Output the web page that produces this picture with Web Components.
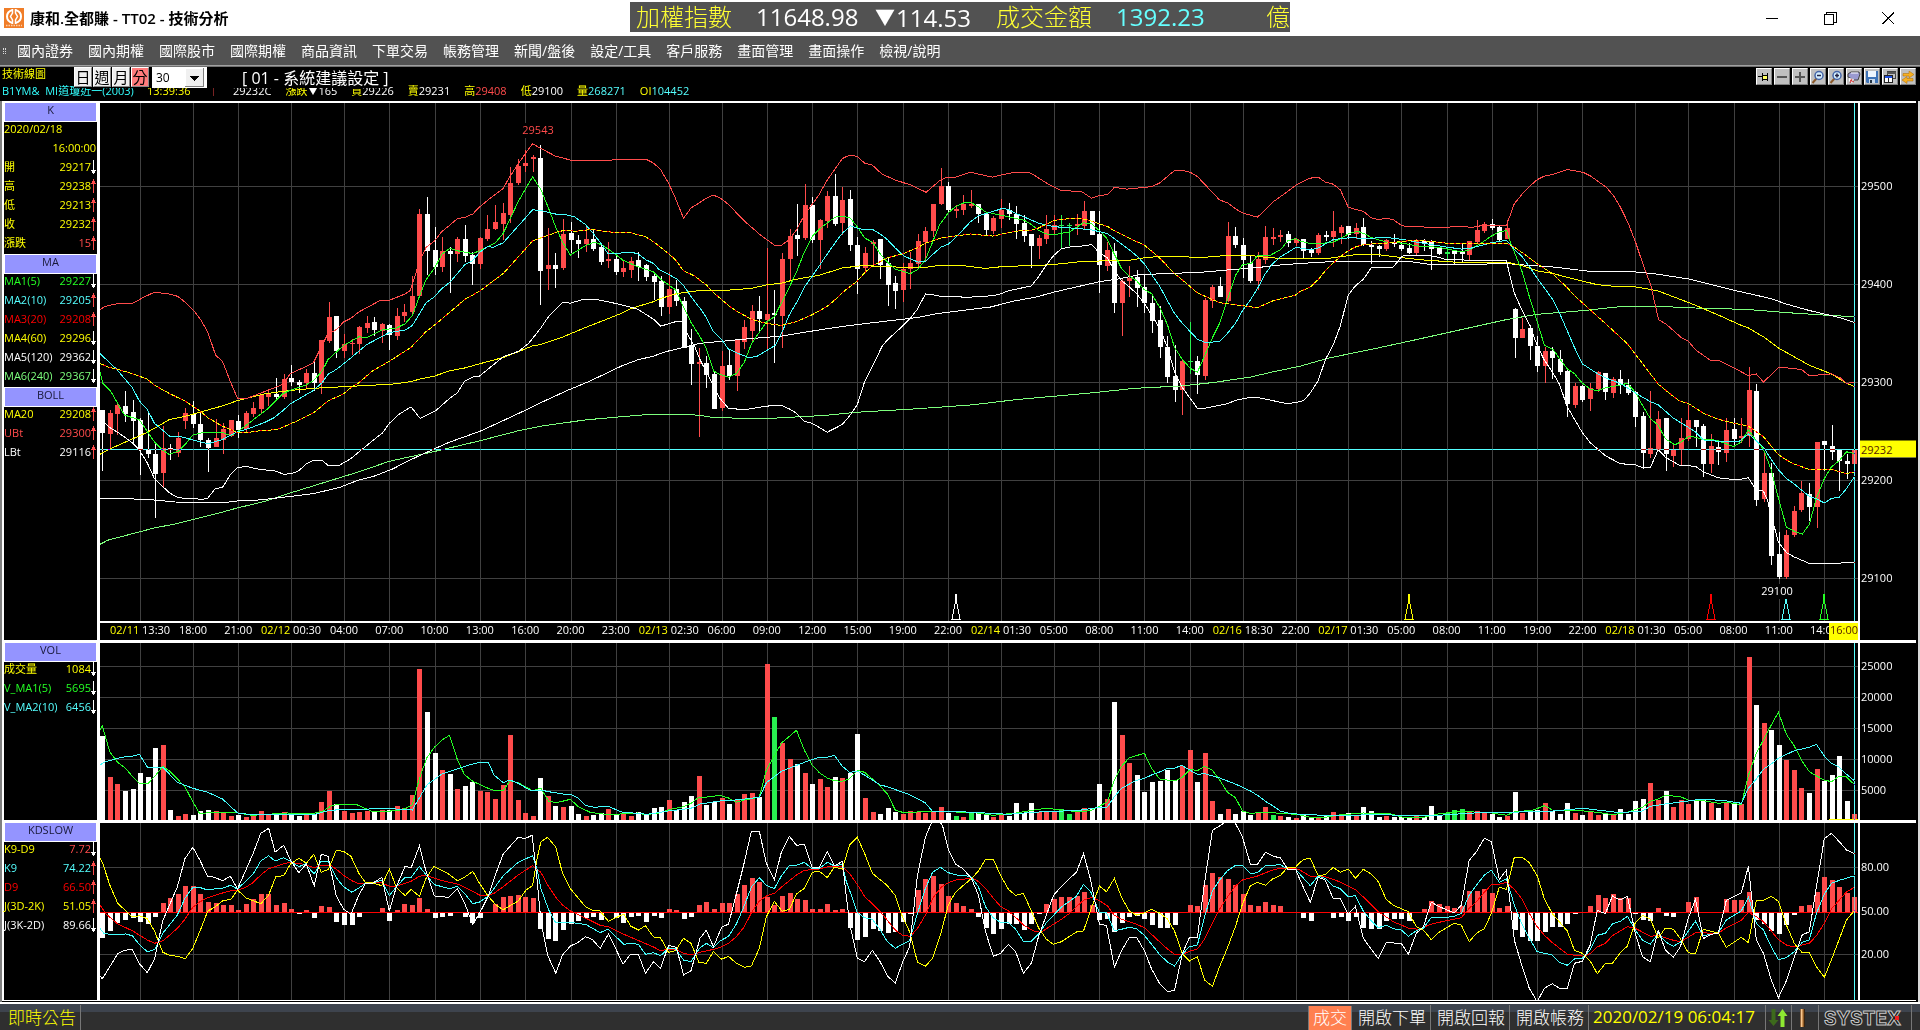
<!DOCTYPE html>
<html lang="zh-Hant">
<head>
<meta charset="utf-8">
<title>康和.全都賺 - TT02 - 技術分析</title>
<style>
    body {
        margin: 0;
        background: #000;
        color: #fff;
        font-family: "Open Sans", "Noto Sans CJK TC", sans-serif;
        font-size: 11px;
    }
</style>
</head>
<body>
<trade-app></trade-app>

<script>
const RED = '#ff4b4b';
const WHITE = '#ffffff';
const GREEN = '#28f050';
const CYAN = '#55ffff';
const COLORS = {r: RED, w: WHITE, g: GREEN};

// Plot sizes the series are recorded at, they are stretched to the real size on draw
const BASE_WIDTH = 1758;
const FIRST_BAR = 2.3;
const BAR_STEP = 7.552;

// Traces come in three overlapping strips, 1568 units wide each
const STRIPS = [
    {start: -10, limit: 1543},
    {start: 600, limit: 1517},
    {start: 1200, limit: 1568}
];
const STRIP_SCALE = 620 / 1568;

// index of the bar, date, time
const TIMES = [
    [5, '02/11', '13:30'], [12, '', '18:00'], [18, '', '21:00'], [25, '02/12', '00:30'], [32, '', '04:00'],
    [38, '', '07:00'], [44, '', '10:00'], [50, '', '13:00'], [56, '', '16:00'], [62, '', '20:00'],
    [68, '', '23:00'], [75, '02/13', '02:30'], [82, '', '06:00'], [88, '', '09:00'], [94, '', '12:00'],
    [100, '', '15:00'], [106, '', '19:00'], [112, '', '22:00'], [119, '02/14', '01:30'], [126, '', '05:00'],
    [132, '', '08:00'], [138, '', '11:00'], [144, '', '14:00'], [151, '02/16', '18:30'], [158, '', '22:00'],
    [165, '02/17', '01:30'], [172, '', '05:00'], [178, '', '08:00'], [184, '', '11:00'], [190, '', '19:00'],
    [196, '', '22:00'], [203, '02/18', '01:30'], [210, '', '05:00'], [216, '', '08:00'], [222, '', '11:00'],
    [228, '', '14:00']
];

// colour, body top, body bottom, high, low
const CANDLES = `w884,948,884,1058 r892,951,884,998 r870,894,864,955 w872,894,830,917 w889,914,855,980 w912,997,906,1069
w997,1008,892,1022 w1009,1065,975,1191 r992,1062,930,1103 w992,999,982,1026 r963,1005,947,1018 r892,914,879,938
w894,923,858,934 w924,969,889,989 w969,992,964,1060 r964,989,909,989 r938,968,922,1008 r912,959,912,961
w915,941,898,965 r892,939,887,946 r878,894,862,904 r840,880,838,892 r836,847,830,872 w837,847,793,855
r796,846,780,852 w793,804,755,815 w804,812,798,834 r778,808,766,824 w778,807,748,830 r685,808,683,838
r619,687,576,692 w616,715,616,736 r696,715,667,736 r692,696,680,728 r647,696,645,724 r635,650,616,664
w633,655,620,672 r640,658,636,692 w641,669,640,712 r616,672,593,684 r604,615,582,632 r559,604,502,612
r325,559,311,561 w325,430,277,498 w428,475,363,498 r430,476,391,489 w430,438,420,550 r396,439,391,461
w396,444,356,461 w442,467,434,527 r394,467,391,481 r368,396,328,402 r348,368,299,370 r322,353,295,398
r237,327,191,350 r188,237,168,242 r180,187,143,205 r163,167,157,205 w165,487,129,584 r470,482,365,543
w470,481,436,536 r382,479,339,484 w379,399,348,436 w399,410,386,450 r396,411,359,433 w396,425,368,430
w419,461,408,470 r453,459,405,479 w453,490,436,498 r479,489,456,506 r459,485,449,507 w456,475,433,516
w470,504,468,515 w502,518,491,570 w516,590,501,616 r539,590,489,610 w539,573,514,587 w573,706,562,706
w698,754,653,812 r747,754,708,961 w750,783,730,820 w781,881,773,881 r758,878,715,886 w755,787,711,798
r685,787,682,830 r647,689,628,710 r602,658,584,689 w602,624,559,661 r610,627,421,712 w607,613,543,750
r453,615,436,706 r388,453,368,515 w385,396,296,444 r299,393,239,398 w299,399,277,408 r342,399,338,481
r274,345,259,364 w274,353,211,359 r285,350,249,384 w282,413,257,430 w413,481,391,552 r436,479,419,489
r405,411,399,473 w396,470,396,510 w466,526,450,587 w521,544,502,596 r482,541,466,575 r465,481,433,539
r402,467,382,475 r373,405,362,461 r296,373,296,390 r246,296,194,299 w245,314,234,319 r311,316,299,336
r296,314,270,327 r296,302,257,308 w296,325,296,350 w325,370,319,385 r336,373,331,382 r314,339,282,364
w315,325,294,342 w324,353,302,396 w351,388,328,405 w382,416,382,479 r393,416,385,453 r368,396,328,411
r356,371,328,382 g356,359,328,425 g356,359,350,416 r353,359,325,385 r316,359,288,371 w316,385,316,385
w382,470,316,549 r428,473,405,487 w430,578,408,607 r516,578,510,672 r507,515,473,561 w506,535,485,590
w533,579,498,607 w579,630,556,664 w627,703,587,736 w704,790,672,807 w787,827,698,861 r744,827,741,898
g743,747,633,780 w744,784,730,838 r570,786,564,798 r532,573,527,593 w530,563,505,563 r388,573,348,577
w388,413,362,422 w413,456,393,507 w464,516,442,522 r453,516,433,541 r391,456,359,467 r391,395,365,413
r385,390,370,405 w382,408,373,419 r396,407,393,416 w396,430,396,450 w428,435,422,447 r385,436,380,441
w385,390,373,402 r373,390,316,418 r362,379,356,410 w359,385,359,396 r365,381,350,396 w362,413,336,416
w413,418,402,467 w416,425,413,447 r399,425,396,430 w405,410,382,418 w413,425,405,430 w422,436,408,439
r402,436,396,444 w402,407,396,430 w405,425,399,485 w420,438,419,441 g434,438,420,459 w430,438,428,468
w430,438,411,464 r402,441,402,455 r371,405,342,407 r353,373,348,379 w353,365,339,372 w362,399,359,402
r365,396,342,396 w596,679,593,736 r653,679,621,679 w650,701,641,741 w701,758,672,775 r716,758,704,807
w716,736,704,795 w738,775,713,784 w773,867,770,904 r815,869,807,878 w815,855,812,861 r821,852,807,886
r775,824,773,832 w778,832,778,855 r796,835,790,850 w795,813,770,838 w812,834,795,840 w832,904,830,932
w901,1006,889,1051 r992,1008,830,1022 r909,997,887,997 w907,1008,907,1057 r997,1015,983,1046 r964,997,907,1040
r912,966,870,972 w912,932,912,989 w929,1038,924,1074 r986,1037,952,1063 w989,1004,975,1042 r941,1005,906,1031
w938,966,907,986 r957,963,907,977 r827,957,762,989 w830,1140,810,1157 r1062,1137,1006,1145 w1062,1299,1035,1326
w1294,1360,1231,1365 r1240,1360,1226,1365 r1172,1240,1157,1246 r1120,1168,1086,1174 w1123,1160,1092,1200
r975,1160,975,1220 w972,983,972,1057 w986,1003,927,1026 w997,1029,997,1114 w1029,1037,1008,1080 r997,1037,997,1037`;

const PRICE_LINES = [
    {color: '#7dff7d', strips: [
        '25,1267 45,1255 163,1220 210,1210 335,1175 373,1163 440,1145 507,1120 680,1060 757,1030 871,1002 985,972 1083,943 1140,930 1253,912 1385,899 1425,896 1500,896 1568,903',
        '0,899 30,905 90,907 190,907 320,899 398,890 540,881 690,869 800,854 990,835 1100,822 1220,815 1300,805 1392,790 1450,775 1568,744',
        '0,759 75,735 180,711 275,688 350,669 522,626 600,611 720,600 810,589 920,589 1000,593 1130,597 1230,606 1310,612 1403,618']},
    {color: WHITE, strips: [
        '25,1137 100,1137 160,1140 215,1146 340,1148 373,1143 430,1140 507,1130 565,1122 630,1105 680,1083 715,1074 765,1052 810,1026 860,1000 910,975 985,945 1045,914 1119,875 1140,863 1205,829 1263,802 1345,758 1385,741 1425,730 1455,718 1520,700 1550,694 1568,694',
        '0,694 55,688 110,682 206,673 320,652 398,640 474,630 550,620 600,609 735,590 795,573 850,562 894,548 1010,518 1060,510 1110,498 1270,491 1340,484 1410,478 1448,472 1530,464 1568,463',
        '0,466 90,460 275,460 330,469 530,467 562,470 640,476 730,488 848,490 900,496 982,510 1096,542 1190,566 1230,582 1288,600 1364,620 1403,635']},
    {color: '#ffff00', strips: [
        '25,1010 50,995 140,950 163,936 201,911 240,902 335,872 373,857 440,838 507,828 565,822 680,815 765,810 810,803 833,796 871,787 910,772 947,764 985,752 1045,734 1083,718 1119,701 1140,697 1195,676 1253,649 1340,610 1369,594 1425,575 1443,566 1481,553 1501,549 1568,543',
        '0,543 60,543 130,537 168,527 206,522 244,511 300,500 360,479 410,472 474,475 532,478 572,477 610,471 666,472 720,480 765,475 880,470 912,467 960,461 1030,458 1086,457 1124,450 1162,446 1220,446 1260,450 1334,443 1392,443 1440,450 1490,452 1568,452',
        '0,452 75,451 140,441 190,440 240,447 300,455 400,463 530,464 562,472 600,487 640,495 695,511 750,526 800,532 850,533 905,544 1000,585 1060,614 1115,642 1134,650 1172,675 1210,707 1288,756 1344,781 1382,808 1403,817']},
    {color: RED, strips: [
        '25,598 35,590 60,582 107,580 140,560 163,548 205,554 222,560 240,576 262,600 280,626 298,662 318,728 335,745 355,803 373,850 398,850 440,832 487,811 507,780 540,763 565,749 600,670 625,653 641,633 660,622 680,604 715,583 735,571 757,571 797,553 810,543 833,462 850,420 871,402 890,375 910,357 929,338 947,335 968,325 985,305 1010,282 1045,252 1060,222 1083,182 1103,150 1119,125 1140,138 1177,160 1215,171 1320,171 1340,169 1410,171 1425,180 1443,198 1463,237 1481,281 1501,337 1520,308 1545,287 1568,276',
        '0,292 16,280 34,271 52,280 72,298 112,345 150,382 188,414 206,414 226,398 244,370 264,328 300,272 322,228 360,167 378,157 398,161 416,180 436,186 460,211 494,228 532,242 572,263 606,230 625,220 646,220 684,206 740,220 760,214 795,206 830,206 845,214 878,238 912,258 965,261 990,280 1010,272 1030,270 1048,249 1080,254 1142,247 1162,237 1200,201 1220,201 1240,206 1258,218 1314,285 1334,293 1354,310 1372,322 1410,334 1450,290 1480,266 1510,240 1544,223 1568,220',
        '0,237 25,223 46,220 64,234 84,240 102,256 122,305 140,312 160,317 180,336 198,341 218,337 236,341 258,359 330,363 370,363 400,360 435,363 466,357 522,358 542,296 562,268 580,247 600,227 618,217 640,212 676,198 716,206 735,217 775,249 795,276 810,305 830,351 850,410 868,470 887,527 907,627 925,638 945,658 965,678 982,687 1000,712 1038,742 1058,742 1096,763 1134,786 1154,781 1172,804 1192,783 1210,763 1250,765 1270,770 1288,786 1344,781 1366,792 1382,808 1403,804']},
    {color: WHITE, strips: [
        '25,908 50,934 75,951 107,977 125,998 145,1035 163,1080 201,1120 221,1133 240,1136 285,1138 298,1135 316,1109 336,1103 355,1068 373,1048 395,1045 430,1053 470,1058 490,1067 510,1065 528,1057 547,1037 565,1027 587,1027 602,1042 630,1042 660,1022 715,971 740,949 757,922 780,897 812,875 835,908 875,885 910,850 929,835 947,802 968,790 985,787 1045,732 1085,716 1110,693 1140,650 1160,617 1195,577 1215,579 1250,568 1275,568 1310,575 1355,587 1385,596 1425,625 1443,645 1463,638 1481,632 1496,631 1510,665 1530,705 1555,760 1568,795',
        '0,740 16,775 34,815 50,850 72,879 112,883 150,876 188,870 206,870 226,881 244,893 264,916 284,922 322,947 360,925 378,901 398,868 416,804 436,760 460,703 474,684 512,645 532,622 550,596 570,553 600,557 612,561 684,562 740,558 760,553 780,544 838,530 856,504 876,470 894,444 914,424 940,418 970,416 990,412 1010,436 1030,450 1050,490 1066,515 1086,533 1104,552 1124,580 1142,613 1162,650 1182,705 1200,775 1220,820 1238,848 1258,879 1275,879 1334,866 1354,856 1390,848 1410,848 1486,866 1526,856 1544,836 1568,787',
        '0,860 10,856 26,835 46,800 64,741 84,698 102,645 122,556 140,530 160,511 180,479 236,476 258,445 280,442 325,443 345,447 370,455 522,459 542,550 562,600 580,640 600,700 618,742 638,775 656,810 676,875 694,910 714,948 734,977 772,1014 810,1037 848,1040 866,1048 886,1048 906,997 924,1018 960,1042 1000,1044 1020,1060 1058,1077 1096,1082 1116,1081 1134,1077 1154,1112 1172,1115 1182,1140 1192,1185 1210,1260 1230,1290 1250,1303 1288,1321 1360,1321 1380,1318 1403,1318']},
    {color: '#24ff24', strips: [
        '25,775 33,808 52,830 87,898 125,912 163,975 182,997 200,1010 222,1002 240,983 260,955 285,948 335,948 355,957 373,946 450,880 487,838 507,827 547,812 565,800 587,773 602,740 641,700 680,675 700,678 740,655 775,650 797,638 815,615 833,560 850,512 871,480 890,440 910,423 929,430 968,438 985,430 1010,416 1025,407 1045,380 1060,345 1083,290 1119,219 1140,255 1160,310 1177,360 1195,405 1215,442 1250,417 1275,405 1295,413 1329,440 1348,457 1385,475 1425,490 1443,511 1481,541 1501,590 1520,634 1540,670 1555,705 1568,745',
        '0,675 15,705 35,773 50,782 72,790 92,780 112,748 130,695 168,633 188,618 206,578 226,533 244,490 264,433 284,388 302,368 322,350 345,332 378,334 400,365 416,393 436,405 456,439 474,462 494,482 532,495 550,484 570,455 606,356 628,322 646,304 670,292 686,293 705,305 722,319 760,328 820,343 838,355 856,372 876,382 900,383 935,376 970,350 990,353 1010,372 1028,393 1048,440 1066,480 1086,502 1104,515 1124,541 1142,552 1162,590 1182,640 1200,705 1220,740 1240,765 1258,776 1276,730 1296,678 1314,637 1334,570 1354,500 1372,470 1395,465 1410,444 1440,444 1468,427 1486,402 1506,395 1526,400 1544,408 1568,409',
        '0,402 26,409 46,410 84,405 102,395 122,382 145,374 165,382 180,392 218,405 258,408 294,416 350,420 408,433 428,428 446,416 466,402 484,388 504,376 522,372 532,405 562,490 580,560 600,632 618,699 640,712 676,767 694,780 714,807 734,824 752,829 772,821 828,808 848,833 866,870 886,908 906,927 924,966 948,983 965,974 982,960 1000,961 1020,969 1040,968 1058,972 1096,988 1116,975 1134,940 1154,972 1172,995 1192,1055 1210,1135 1230,1218 1250,1230 1270,1238 1288,1210 1306,1135 1326,1080 1344,1046 1364,1028 1382,1003 1403,1008']},
    {color: '#44ffff', strips: [
        '25,723 65,765 107,820 125,858 145,882 163,922 201,958 221,958 240,963 298,980 335,968 373,946 398,938 440,920 465,906 487,886 507,866 547,840 565,828 587,806 602,782 625,767 660,735 700,697 757,663 797,656 815,643 833,610 850,578 871,561 890,537 910,520 929,495 947,470 965,460 985,435 1005,418 1020,420 1045,407 1060,388 1103,334 1119,313 1140,315 1177,325 1195,325 1225,333 1253,355 1270,377 1295,413 1310,438 1348,436 1369,434 1387,439 1405,455 1425,466 1440,484 1463,497 1485,511 1500,527 1520,560 1540,590 1568,640',
        '0,593 15,618 34,660 55,684 72,710 95,722 125,735 145,730 190,700 210,655 226,612 244,578 264,533 284,502 322,439 340,410 360,380 380,359 398,365 416,370 438,370 456,382 474,398 494,422 515,444 532,453 552,462 570,460 590,439 610,419 628,411 646,393 684,347 704,330 735,320 765,309 780,312 798,323 856,351 894,361 960,367 990,370 1030,381 1048,395 1086,427 1104,444 1124,467 1142,498 1162,530 1182,572 1200,608 1220,637 1238,658 1258,682 1280,692 1314,688 1334,665 1354,637 1372,600 1392,570 1410,537 1430,495 1448,467 1468,447 1490,432 1506,421 1530,423 1550,421 1568,416',
        '0,422 26,427 46,422 84,398 122,393 180,394 218,392 258,397 294,405 370,419 408,425 428,424 446,418 484,407 522,400 542,425 562,447 580,475 600,508 638,567 658,612 676,658 694,705 714,752 752,780 772,792 810,808 848,835 886,860 906,869 944,907 1000,946 1020,969 1040,972 1110,974 1134,952 1154,972 1172,990 1192,1025 1210,1054 1230,1079 1250,1095 1288,1130 1306,1137 1326,1149 1344,1136 1364,1132 1382,1108 1403,1072']},
    // MA3 and the middle band share one path, so it is drawn twice: red, then yellow dashes
    {color: '#ff0000', dash: '#ffff00', strips: [
        '25,751 45,761 70,768 107,780 145,796 163,813 201,837 240,858 280,888 298,906 335,930 373,948 398,948 430,943 470,940 487,933 528,913 565,892 602,858 641,838 660,820 680,806 715,772 757,745 812,705 833,680 850,660 871,642 929,587 947,569 985,545 1045,495 1085,445 1119,402 1140,393 1185,375 1200,372 1230,374 1270,369 1310,376 1369,379 1405,390 1425,404 1463,438 1481,456 1501,487 1530,502 1568,536',
        '0,514 16,527 34,549 72,586 92,602 130,625 168,637 205,643 244,632 284,612 322,588 340,571 360,549 398,516 416,493 436,473 474,450 512,439 550,421 570,408 610,393 684,382 740,388 798,374 838,371 856,365 894,344 914,340 955,337 975,340 1030,360 1048,373 1086,394 1124,414 1162,450 1200,495 1220,513 1258,550 1314,578 1410,592 1448,573 1506,556 1544,533 1568,508',
        '0,546 26,533 46,512 64,487 84,465 102,447 122,430 140,419 160,412 218,408 294,399 370,408 522,408 542,420 562,435 600,467 638,495 676,535 694,558 772,637 828,695 906,810 944,845 960,858 982,865 1020,893 1058,910 1096,921 1134,930 1154,946 1172,960 1210,1011 1230,1026 1250,1038 1288,1053 1344,1053 1382,1065 1403,1060']}
];

const VOLUMES = `w318 r441 r462 w483 w477 w429 w441 w354 r345 w540 r558 r552 w555 w543 w540 r543 r549 r558 w555 r561
r555 r543 r555 w549 r546 w555 w558 r549 w553 r516 r483 w522 r543 r549 r546 r543 w543 r540 w540 r528
r534 r495 r117 w246 w369 r420 w432 r477 w468 w456 r483 r486 r507 r465 r315 r510 r549 r558 w444 r498
w528 r531 w528 w552 r558 w555 w549 r537 w552 r549 r558 w546 w555 w534 w531 r510 w540 w516 w498 r438
w525 w516 r504 w522 r510 r492 r489 w500 r102 g261 r339 r387 w402 r429 w462 r447 r471 w441 r444 w429
w312 r504 r546 w552 w534 w546 r552 r543 r545 r549 r546 r531 w549 g558 r561 g546 w549 w552 r561 r555
w558 w519 w549 w519 r546 r543 r546 g537 g552 r543 r534 w537 w462 r507 w216 r315 r399 w435 w486 w456
w453 w420 w450 r408 r360 w456 r369 r513 w552 r537 w552 w543 w555 r549 r531 g555 r558 w561 r564 w555
w564 r563 w558 r546 r552 w549 r558 w531 w543 w561 r558 w561 w561 w561 r558 w561 w528 w555 g549 g540
g537 r546 r543 r549 w552 w561 r558 w486 r549 w540 w540 r519 w543 w552 w519 r549 w555 r543 r555 w549
r555 w537 w552 w513 w507 r459 r510 w483 r531 r510 r522 w510 w510 r519 w534 r519 w519 r522 r81 w225
r279 w300 w345 r390 r420 r474 w489 r417 w453 w435 w378 w513 r552`;

const VOLUME_LINES = [
    {color: '#24ff24', strips: [
        '25,300 31,287 50,366 70,397 90,415 107,439 125,460 147,460 163,440 184,409 201,423 240,470 260,515 277,550 335,547 373,549 410,556 500,549 560,552 590,543 612,526 640,523 675,524 715,545 780,542 797,535 815,525 833,445 852,383 871,352 890,330 909,316 929,388 947,434 968,454 1005,474 1025,482 1045,482 1062,452 1083,458 1119,482 1140,475 1160,514 1180,518 1215,508 1235,530 1265,547 1310,554 1385,549 1405,554 1440,549 1463,539 1501,530 1520,520 1540,502 1568,505',
        '0,504 50,496 72,504 92,517 112,510 150,502 168,420 188,378 206,339 244,301 264,361 284,406 302,428 322,444 340,452 360,454 378,446 398,421 416,427 436,447 456,469 474,492 494,540 512,547 590,545 630,545 700,549 740,556 800,549 840,541 876,535 960,546 990,541 1030,516 1048,450 1066,409 1086,383 1124,370 1142,415 1162,447 1200,453 1220,442 1240,418 1258,422 1276,409 1296,421 1314,450 1334,487 1354,503 1372,543 1392,550 1430,547 1506,553 1544,562 1568,563',
        '0,555 25,562 64,562 100,555 160,549 230,552 260,562 312,562 350,552 410,543 440,546 470,546 522,556 542,546 590,540 618,527 638,540 700,541 752,547 790,554 828,547 866,532 886,514 906,507 924,496 962,500 982,510 1020,512 1060,520 1080,517 1116,524 1134,436 1154,370 1172,330 1192,285 1210,247 1230,313 1250,348 1268,390 1288,425 1306,438 1326,450 1344,455 1364,438 1382,441 1403,465']},
    {color: '#44ffff', strips: [
        '25,406 35,397 70,385 90,380 107,379 125,373 145,411 163,414 184,412 221,457 260,475 298,487 335,507 355,529 373,549 400,553 570,553 602,542 640,538 700,538 720,535 797,538 815,540 852,465 890,432 910,424 950,408 985,397 1007,397 1022,435 1045,458 1062,450 1083,460 1115,482 1140,480 1160,485 1200,493 1215,493 1235,505 1253,526 1275,532 1310,529 1345,546 1410,553 1463,543 1520,535 1545,521 1568,521',
        '0,522 50,513 100,509 150,502 168,458 206,424 264,397 302,382 322,382 340,376 360,409 378,427 398,424 416,435 456,465 474,470 532,495 570,519 588,544 640,544 720,549 780,553 840,547 900,544 960,541 1010,532 1030,531 1048,500 1066,475 1086,462 1104,451 1124,445 1142,435 1162,426 1182,415 1200,415 1218,406 1258,433 1276,431 1314,444 1354,462 1392,483 1410,496 1430,514 1450,528 1468,544 1490,550 1568,556',
        '0,553 60,556 130,558 170,553 260,556 350,556 440,549 480,546 530,549 580,543 640,543 714,535 752,540 810,548 866,543 886,529 924,522 1000,510 1030,508 1080,513 1116,520 1134,475 1154,447 1172,418 1192,402 1210,385 1250,362 1288,352 1306,343 1326,378 1344,400 1364,412 1382,433 1403,453']}
];

const HISTOGRAM = `923 903 879 869 863 875 881 860 819 804 792 768 768 792 816 819 825 825 839 822
807 792 792 825 819 837 851 840 863 828 831 875 885 885 860 845 845 834 872 840
822 825 804 837 863 860 857 849 860 879 863 845 822 801 798 795 801 804 896 926
932 899 881 872 863 860 869 849 863 879 860 857 875 857 863 837 840 866 860 825
816 837 819 819 792 765 744 756 801 825 798 789 807 810 837 837 822 840 837 893
929 920 896 902 908 905 876 851 780 747 738 762 798 819 828 837 860 893 911 896
881 881 899 881 851 822 807 801 801 798 786 825 869 866 905 878 860 857 866 884
893 893 884 845 825 828 765 729 741 747 765 792 825 828 816 825 828 845 845 863
872 845 845 863 860 872 860 893 896 896 872 866 866 872 845 837 813 822 828 834
828 783 783 777 789 834 828 899 920 932 932 905 890 890 881 851 849 828 795 804
792 804 804 851 869 872 834 857 860 849 816 801 849 845 845 807 810 810 786 869
881 902 911 884 854 828 825 786 741 750 771 789 801`;

const KD_LINES = [
    {color: '#ff0000', strips: [
        '25,825 40,851 70,882 107,902 145,930 163,940 185,932 221,895 240,868 260,832 277,816 298,803 335,789 360,781 373,781 392,773 412,758 432,735 452,716 487,702 507,697 547,704 565,713 580,708 608,705 623,718 641,736 665,754 680,761 715,759 735,757 757,769 775,769 812,754 833,739 850,736 885,750 935,764 985,795 1005,798 1022,790 1045,770 1083,735 1119,707 1140,727 1160,770 1180,805 1195,825 1215,843 1253,864 1290,886 1310,890 1350,913 1425,951 1443,962 1463,957 1481,957 1501,970 1520,975 1545,966 1568,960',
        '0,967 35,958 55,950 72,940 92,920 112,890 130,848 150,813 168,798 190,789 206,771 244,735 264,721 302,717 322,711 360,710 378,730 398,764 416,799 456,845 494,900 512,916 532,919 550,895 570,855 590,802 610,772 628,758 650,749 690,745 706,756 722,775 742,805 760,829 780,843 800,864 820,887 845,903 862,907 880,893 914,868 935,850 952,830 970,811 990,802 1010,812 1030,827 1048,856 1066,868 1104,883 1124,893 1150,922 1182,957 1200,973 1220,973 1240,963 1258,957 1276,928 1296,880 1314,837 1334,801 1354,768 1372,750 1410,738 1448,720 1468,715 1506,716 1526,725 1544,740 1568,738',
        '0,720 26,739 64,740 102,756 140,779 160,801 198,845 236,875 274,894 300,898 330,883 370,872 408,863 428,835 446,815 466,787 484,764 504,763 522,757 542,778 562,808 580,850 600,890 618,916 640,940 676,972 694,976 720,979 735,970 752,951 772,940 790,917 828,890 848,895 886,919 906,916 944,931 962,935 982,922 1000,908 1058,910 1078,893 1116,871 1134,847 1154,860 1172,875 1192,903 1210,929 1230,945 1250,951 1270,945 1288,940 1306,917 1326,880 1344,837 1364,810 1382,786 1403,771']},
    {color: '#44ffff', strips: [
        '25,895 35,910 50,913 90,912 107,917 125,944 145,965 163,959 185,908 221,855 240,805 260,772 277,772 295,779 335,775 355,766 373,777 412,733 432,693 452,677 468,693 490,683 507,694 528,710 545,702 567,732 585,693 602,694 623,743 641,770 662,787 680,774 697,760 715,760 738,750 757,797 775,770 797,742 812,742 833,709 850,735 871,764 910,776 929,769 947,790 968,821 985,816 1007,799 1025,770 1045,737 1083,697 1119,677 1130,715 1140,775 1160,840 1177,877 1215,877 1255,884 1290,908 1310,897 1350,943 1369,940 1387,943 1405,973 1425,968 1443,977 1463,954 1481,957 1501,990 1520,995 1540,957 1560,940 1568,943',
        '0,954 16,940 34,953 52,932 72,919 92,882 112,827 130,771 150,743 168,766 188,776 206,737 226,706 244,706 264,697 284,717 302,715 322,697 340,708 360,703 370,755 378,780 398,848 416,863 436,868 456,900 474,935 494,955 512,943 530,932 550,850 570,775 588,727 608,712 628,728 650,735 684,739 704,770 722,830 742,864 760,877 780,878 798,897 818,934 838,934 856,912 876,878 894,856 914,831 952,799 970,763 988,785 1010,848 1028,848 1048,903 1086,892 1104,896 1124,916 1162,973 1182,996 1200,1008 1220,972 1238,950 1258,945 1276,860 1296,783 1314,750 1334,722 1354,706 1372,706 1392,731 1410,728 1430,707 1468,704 1486,717 1506,717 1526,743 1544,767 1568,735',
        '0,733 26,767 46,738 64,745 84,768 102,776 122,800 140,797 160,843 180,872 198,893 218,886 236,896 256,900 274,919 294,902 312,895 332,862 370,862 390,859 408,850 428,795 466,735 484,721 504,757 522,746 542,825 562,884 580,925 600,965 638,975 656,997 676,1006 694,987 714,985 734,960 752,916 772,910 790,882 810,874 828,859 848,900 866,930 886,943 906,910 924,935 944,949 962,937 1000,874 1020,917 1058,909 1078,870 1116,843 1134,801 1154,880 1172,900 1192,950 1210,989 1230,983 1250,965 1270,937 1288,930 1306,850 1326,793 1344,760 1364,751 1403,737']},
    {color: '#ffff00', strips: [
        '25,685 32,700 50,765 70,820 107,861 125,857 145,866 163,903 184,967 201,976 222,979 241,986 260,955 280,898 298,843 315,832 335,813 357,807 373,780 395,804 432,821 452,795 470,740 490,737 507,702 528,685 547,700 566,673 585,727 603,718 623,661 641,664 660,679 680,730 697,758 715,759 738,767 757,717 775,772 797,797 812,778 833,799 850,745 870,709 907,732 929,752 947,742 968,724 985,760 1007,799 1027,825 1045,839 1083,813 1103,780 1119,767 1130,690 1140,636 1157,622 1178,651 1195,730 1215,776 1253,830 1270,840 1290,843 1311,874 1350,852 1367,888 1387,900 1405,887 1425,921 1443,924 1463,967 1481,962 1501,925 1520,940 1540,997 1558,1000 1568,982',
        '0,997 16,1000 34,965 55,988 72,979 92,1000 112,1012 130,1008 150,955 168,860 188,814 208,844 226,838 244,792 264,775 284,727 302,724 322,743 340,711 360,717 378,645 398,622 416,670 436,730 474,767 494,797 512,860 530,905 550,997 570,1009 588,985 608,915 628,825 646,787 684,748 704,724 722,688 742,688 760,736 780,778 798,796 818,790 838,843 856,893 876,928 894,943 914,935 952,906 970,903 988,840 1010,768 1028,785 1048,745 1066,802 1086,844 1104,855 1124,849 1142,838 1162,849 1182,867 1200,903 1220,972 1238,993 1258,980 1276,1050 1296,1069 1314,1010 1334,953 1354,890 1372,822 1392,767 1410,757 1430,766 1448,747 1468,736 1486,712 1506,712 1526,688 1544,685 1568,742',
        '0,697 10,688 26,685 46,737 64,734 84,712 102,727 122,717 140,745 160,718 180,732 198,755 218,808 236,826 274,845 294,890 312,900 332,929 350,908 390,880 408,885 428,935 446,910 466,896 484,850 504,772 522,778 542,682 562,682 580,698 600,737 618,807 638,851 676,903 694,961 714,970 734,993 752,1031 772,1001 790,1000 810,968 828,948 848,878 866,856 886,867 906,924 924,894 944,898 962,926 982,968 1000,971 1020,898 1058,909 1078,952 1116,922 1134,938 1154,811 1172,811 1192,799 1210,814 1230,885 1250,940 1270,968 1288,968 1306,1010 1326,1042 1344,990 1364,927 1382,870 1403,840']},
    {color: WHITE, strips: [
        '25,1038 31,1046 50,1010 70,971 87,961 107,958 125,1001 145,1028 163,987 184,872 221,770 240,686 260,652 277,688 297,738 315,742 335,752 355,739 373,777 412,672 432,610 452,595 468,666 490,646 507,691 528,728 547,702 567,767 585,673 602,679 623,798 641,837 660,853 680,795 697,760 715,760 738,742 757,843 775,770 797,709 812,714 833,648 850,725 871,798 907,802 929,777 947,818 968,884 985,850 1007,799 1025,735 1045,672 1083,622 1100,626 1118,616 1130,740 1140,870 1157,975 1178,1030 1195,975 1215,948 1235,937 1253,920 1270,928 1290,955 1311,912 1330,957 1348,1003 1367,973 1387,973 1405,1030 1425,995 1443,1015 1463,946 1483,952 1501,1035 1520,1022 1540,937 1560,902 1568,925',
        '0,925 16,901 34,950 55,892 72,882 92,792 112,697 130,604 150,604 168,700 188,750 206,665 226,619 244,646 264,643 284,713 302,712 322,664 340,708 360,694 370,800 380,890 398,985 416,995 436,961 456,996 474,1038 494,1059 512,998 530,950 550,735 570,622 588,570 600,560 614,590 628,658 646,702 665,716 686,745 704,795 722,905 742,979 760,970 780,943 798,964 818,1030 838,999 856,920 894,796 910,775 932,748 952,727 970,671 988,750 1010,882 1028,887 1048,1012 1066,962 1086,922 1104,922 1124,962 1142,1017 1162,1060 1182,1084 1200,1082 1220,970 1238,922 1258,922 1276,760 1296,601 1314,588 1334,572 1350,570 1372,622 1392,703 1410,703 1430,667 1448,678 1468,684 1486,717 1506,717 1526,776 1544,817 1568,737',
        '0,750 26,817 46,742 64,750 84,806 102,806 122,852 140,829 160,925 198,986 218,938 256,940 274,973 294,910 312,890 332,816 350,829 390,849 408,825 428,691 446,665 466,625 484,635 504,748 522,721 542,930 562,1010 580,1075 600,1115 618,1075 638,1061 656,1075 676,1075 694,1000 714,994 734,945 752,841 772,851 790,798 810,810 828,799 848,910 866,980 886,995 906,901 924,960 944,982 962,950 982,865 1000,808 1020,926 1040,913 1058,910 1078,811 1116,789 1134,709 1154,930 1172,970 1192,1050 1210,1103 1230,1052 1250,982 1270,915 1288,905 1306,770 1326,626 1344,610 1364,635 1382,660 1403,671']}
];

// height: recorded plot height, scale/offset: trace units to plot pixels, ticks: [trace y, label]
const PLOTS = {
    price: {
        height: 518, scale: 550 / 1568, offset: -3, lines: PRICE_LINES,
        ticks: [[246, '29500'], [525, '29400'], [805, '29300'], [1084, '29200'], [1364, '29100']]
    },
    volume: {
        height: 177, scale: 1 / 3, offset: -13, lines: VOLUME_LINES,
        ticks: [[109, '25000'], [202, '20000'], [295, '15000'], [388, '10000'], [481, '5000']]
    },
    kd: {
        height: 177, scale: 1 / 3, offset: -193, lines: KD_LINES,
        ticks: [[712, '80.00'], [845, '50.00'], [973, '20.00']]
    }
};

function barX(index, width) {
    return Math.round((FIRST_BAR + index * BAR_STEP) * width / BASE_WIDTH);
}

class ChartPlot extends HTMLElement {
    constructor() {
        super();
        this.attachShadow({mode: 'open'});
        this.shadowRoot.innerHTML = `
            <style>
                :host {
                    display: block;
                    overflow: hidden;
                    min-width: 0;
                    min-height: 0;
                    background: #000;
                }
                svg {
                    display: block;
                    width: 100%;
                    height: 100%;
                    shape-rendering: crispEdges;
                    font-size: 11px;
                }
                polyline, path {
                    fill: none;
                }
                .cursor {
                    mix-blend-mode: difference;
                }
            </style>
            <svg role="img"></svg>
        `;
        this.svg = this.shadowRoot.querySelector('svg');
    }

    connectedCallback() {
        this.svg.setAttribute('aria-label', this.getAttribute('kind'));
        this.draw();
        new ResizeObserver(() => this.draw()).observe(this);
    }

    draw() {
        const kind = this.getAttribute('kind');
        this.w = this.clientWidth;
        this.h = this.clientHeight;
        this.plot = PLOTS[kind];
        let out = this.grid();
        if (kind === 'price') {
            out += this.candles() + this.lines() + this.priceMarks();
        } else if (kind === 'volume') {
            out += this.volumes() + this.lines();
            out += this.rect(this.w - 29, this.h - 1, 29, 1, '#ffff00');
        } else {
            out += this.histogram() + this.lines();
        }
        out += `<rect class="cursor" x="${barX(232, this.w)}" y="0" width="1" height="${this.h}" fill="${CYAN}"/>`;
        this.svg.innerHTML = out;
    }

    y(value) {
        return (value * this.plot.scale + this.plot.offset) * this.h / this.plot.height;
    }

    rect(x, y, width, height, color) {
        return `<rect x="${x}" y="${y}" width="${width}" height="${height}" fill="${color}"/>`;
    }

    grid() {
        let out = '';
        TIMES.forEach(([index]) => {
            out += this.rect(barX(index, this.w), 0, 1, this.h, '#404040');
        });
        this.plot.ticks.forEach(([value]) => {
            out += this.rect(0, Math.round(this.y(value)), this.w, 1, '#404040');
        });
        return out;
    }

    lines() {
        return this.plot.lines.map(line => {
            const points = [];
            line.strips.forEach((strip, i) => {
                strip.split(' ').forEach(pair => {
                    const [x, y] = pair.split(',').map(Number);
                    if (x > STRIPS[i].limit) return;
                    const px = (STRIPS[i].start + x * STRIP_SCALE) * this.w / BASE_WIDTH;
                    points.push(px.toFixed(1) + ',' + this.y(y).toFixed(1));
                });
            });
            const list = points.join(' ');
            let out = `<polyline points="${list}" stroke="${line.color}"/>`;
            if (line.dash) {
                out += `<polyline points="${list}" stroke="${line.dash}" stroke-dasharray="4 2"/>`;
            }
            return out;
        }).join('');
    }

    candles() {
        return CANDLES.split(/\s+/).map((item, i) => {
            const color = COLORS[item[0]];
            const [top, bottom, high, low] = item.slice(1).split(',').map(v => Math.round(this.y(Number(v))));
            const x = barX(i, this.w);
            return this.rect(x, high, 1, Math.max(1, low - high), color) +
                this.rect(x - 2, top, 5, Math.max(1, bottom - top), color);
        }).join('');
    }

    volumes() {
        return VOLUMES.split(/\s+/).map((item, i) => {
            const top = Math.round(this.y(Number(item.slice(1))));
            return this.rect(barX(i, this.w) - 2, top, 5, Math.max(0, this.h - top), COLORS[item[0]]);
        }).join('');
    }

    histogram() {
        const zero = Math.round(this.y(845));
        const bars = HISTOGRAM.split(/\s+/).map((item, i) => {
            const end = Math.round(this.y(Number(item)));
            const x = barX(i, this.w) - 2;
            return end < zero ? this.rect(x, end, 5, zero - end, RED) : this.rect(x, zero, 5, end - zero, WHITE);
        }).join('');
        return bars + this.rect(0, zero, this.w, 1, '#ff0000');
    }

    priceMarks() {
        let out = '';
        const marks = [[113, WHITE], [173, '#ffff00'], [213, '#ff0000'], [223, CYAN], [228, '#24ff24']];
        marks.forEach(([index, color]) => {
            const x = barX(index, this.w);
            const b = this.h - 2;
            out += `<path d="M${x - 4} ${b}L${x - 1} ${b - 15}L${x} ${b - 25}L${x + 1} ${b - 15}L${x + 4} ${b}Z" stroke="${color}"/>`;
        });
        const labels = [[58, 86, '29543', RED], [222, 1400, '29100', WHITE]];
        labels.forEach(([index, y, text, color]) => {
            const x = barX(index, this.w) - 2;
            const ty = Math.round(this.y(y));
            out += this.rect(x - 16, ty - 7, 32, 15, '#000');
            out += `<text x="${x}" y="${ty + 4}" fill="${color}" text-anchor="middle">${text}</text>`;
        });
        out += `<rect class="cursor" x="0" y="${Math.round(this.y(996))}" width="${this.w}" height="1" fill="${CYAN}"/>`;
        return out;
    }
}

class ValueAxis extends HTMLElement {
    constructor() {
        super();
        this.attachShadow({mode: 'open'});
        this.shadowRoot.innerHTML = `
            <style>
                :host {
                    display: block;
                    position: relative;
                    overflow: hidden;
                    background: #000;
                }
                span {
                    position: absolute;
                    left: 0;
                    right: 0;
                    padding-left: 1px;
                    line-height: 17px;
                    transform: translateY(-50%);
                }
                .current {
                    background: #ffff00;
                    color: #552200;
                }
            </style>
        `;
    }

    // below: height of what sits under the plot but beside the axis
    connectedCallback() {
        const plot = PLOTS[this.getAttribute('kind')];
        const below = Number(this.getAttribute('below') || 0);
        const add = (value, text, name) => {
            const label = document.createElement('span');
            const ratio = (value * plot.scale + plot.offset) / plot.height;
            label.textContent = text;
            label.className = name;
            label.style.top = `calc((100% - ${below}px) * ${ratio.toFixed(4)})`;
            this.shadowRoot.append(label);
        };
        plot.ticks.forEach(([value, text]) => add(value - 4, text, ''));
        if (this.hasAttribute('current')) {
            add(996, this.getAttribute('current'), 'current');
        }
    }
}

class TimeAxis extends HTMLElement {
    constructor() {
        super();
        this.attachShadow({mode: 'open'});
        this.shadowRoot.innerHTML = `
            <style>
                :host {
                    display: block;
                    position: relative;
                    overflow: hidden;
                    background: #000;
                    line-height: 13px;
                }
                span {
                    position: absolute;
                    top: 0;
                    transform: translateX(-50%);
                    white-space: nowrap;
                }
                em {
                    color: #ffff00;
                    font-style: normal;
                }
                .current {
                    right: 0;
                    transform: none;
                    padding: 0 0 4px 1px;
                    background: #ffff00;
                    color: #552200;
                }
            </style>
        `;
        TIMES.forEach(([index, date, time]) => {
            const label = document.createElement('span');
            label.style.left = ((FIRST_BAR + index * BAR_STEP) / BASE_WIDTH * 100).toFixed(2) + '%';
            label.innerHTML = date ? `<em>${date}</em> ${time}` : time;
            this.shadowRoot.append(label);
        });
        const current = document.createElement('span');
        current.className = 'current';
        current.textContent = '16:00';
        this.shadowRoot.append(current);
    }
}

// rows: name|value|colour|value colour|arrow, split by ;
class IndicatorTable extends HTMLElement {
    constructor() {
        super();
        this.attachShadow({mode: 'open'});
    }

    connectedCallback() {
        const rows = this.getAttribute('rows').split(';').map(row => {
            const [name, value, color, valueColor, arrow] = row.split('|');
            if (!arrow) {
                return `<tr style="color:${color}"><td colspan="3" class="${name ? '' : 'right'}">${name || value}</td></tr>`;
            }
            const icon = arrow === 'u'
                ? `<svg width="5" height="14" fill="${RED}"><path d="M2 0h1v14h-1zM1 2h3v2h-3zM0 4h5v1h-5z"/></svg>`
                : `<svg width="5" height="14" fill="#fff"><path d="M2 0h1v14h-1zM1 11h3v2h-3zM0 10h5v1h-5z"/></svg>`;
            return `<tr style="color:${color}"><th>${name}</th><td class="right" style="color:${valueColor}">${value}</td><td class="arrow">${icon}</td></tr>`;
        }).join('');
        this.shadowRoot.innerHTML = `
            <style>
                :host {
                    display: block;
                    background: #000;
                }
                h2 {
                    margin: 0;
                    height: 18px;
                    border: solid #fff;
                    border-width: 0 1px 1px;
                    background: #9494ff;
                    color: #181838;
                    font-size: 11px;
                    font-weight: 400;
                    line-height: 14px;
                    text-align: center;
                }
                table {
                    width: 100%;
                    padding-right: 1px;
                    border-spacing: 0;
                    line-height: 14px;
                }
                th, td {
                    height: 14px;
                    padding: 0 0 5px;
                    font-weight: 400;
                    text-align: left;
                    white-space: nowrap;
                }
                tr:last-child > * {
                    padding-bottom: 4px;
                }
                .right {
                    text-align: right;
                }
                .arrow {
                    width: 5px;
                }
                svg {
                    display: block;
                    shape-rendering: crispEdges;
                }
            </style>
            <h2><slot></slot></h2>
            <table>${rows}</table>
        `;
    }
}

class TitleBar extends HTMLElement {
    constructor() {
        super();
        this.attachShadow({mode: 'open'});
        this.shadowRoot.innerHTML = `
            <style>
                :host {
                    display: grid;
                    grid-template-columns: 1fr 660px 1fr;
                    height: 36px;
                    background: #fff;
                    color: #000;
                }
                .name {
                    display: flex;
                    align-items: center;
                    gap: 6px;
                    padding-left: 4px;
                }
                h1 {
                    margin: 0;
                    font-size: 15px;
                    font-weight: 600;
                    line-height: 20px;
                }
                .ticker {
                    display: grid;
                    grid-template-columns: 120px 119px 121px 120px 1fr auto;
                    box-sizing: border-box;
                    height: 30px;
                    margin-top: 2px;
                    padding-left: 6px;
                    background: #525252;
                    color: #fff;
                    font-size: 24px;
                    line-height: 29px;
                    white-space: nowrap;
                }
                .change {
                    display: flex;
                    align-items: center;
                    gap: 5px;
                }
                small {
                    font-size: 20px;
                    line-height: 29px;
                    width: 16px;
                }
                .label {
                    color: #ffff33;
                    font-weight: 300;
                }
                .amount {
                    color: #66ffff;
                }
                .window {
                    display: flex;
                    justify-content: flex-end;
                    padding-right: 3px;
                }
                button {
                    width: 58px;
                    border: 0;
                    padding: 0;
                    background: none;
                }
                .window svg {
                    display: block;
                    margin: 0 auto;
                    shape-rendering: crispEdges;
                }
            </style>
            <div class="name">
                <svg width="20" height="20" viewBox="0 0 20 20">
                    <rect width="20" height="20" fill="#f07d28"/>
                    <path d="M8.500 2C5 3 3 5.500 3 8.500S5 14 8.500 15M11.500 2C15 3 17 5.500 17 8.500S15 14 11.500 15" fill="none" stroke="#fff" stroke-width="2"/>
                    <path d="M8.500 1v4L6.500 8.500 8.500 12v4M11.500 1v4l2 3.500-2 3.500v4" fill="none" stroke="#fff" stroke-width="1.500"/>
                    <path d="M2 17.500h16" stroke="#fbd0aa" stroke-width="1.500" stroke-dasharray="1.500 1"/>
                </svg>
                <h1><slot></slot></h1>
            </div>
            <div class="ticker">
                <span class="label">加權指數</span><span>11648.98</span><span class="change"><small>▼</small>114.53</span>
                <span class="label">成交金額</span><span class="amount">1392.23</span><span class="label">億</span>
            </div>
            <div class="window">
                <button aria-label="最小化"><svg width="13" height="13"><path d="M0 6.500H12" stroke="#000"/></svg></button>
                <button aria-label="還原"><svg width="13" height="13"><path d="M.5 2.500h9v10h-9zM2.500 2.500v-2h10v9.500h-2.500" fill="none" stroke="#000"/></svg></button>
                <button aria-label="關閉"><svg width="13" height="13"><path d="M.5 .5L12 12M12 .5L.5 12" stroke="#000"/></svg></button>
            </div>
        `;
    }
}

class MenuBar extends HTMLElement {
    constructor() {
        super();
        this.attachShadow({mode: 'open'});
        const items = ['國內證券', '國內期權', '國際股市', '國際期權', '商品資訊', '下單交易', '帳務管理', '新聞/盤後',
            '設定/工具', '客戶服務', '畫面管理', '畫面操作', '檢視/說明'];
        this.shadowRoot.innerHTML = `
            <style>
                :host {
                    display: block;
                    height: 29px;
                    border-bottom: 1px solid #a0a0a0;
                    background: #525252;
                }
                nav {
                    display: flex;
                    align-items: center;
                    gap: 15px;
                    height: 100%;
                    padding-left: 3px;
                    font-size: 14px;
                    line-height: 20px;
                }
                i {
                    width: 1px;
                    height: 6px;
                    margin-right: -4px;
                    border: dotted #ddd;
                    border-width: 0 1px;
                }
                a {
                    color: #fff;
                    text-decoration: none;
                    white-space: nowrap;
                }
            </style>
            <nav><i></i>${items.map(item => `<a href="#">${item}</a>`).join('')}</nav>
        `;
    }
}

class QuoteStrip extends HTMLElement {
    constructor() {
        super();
        this.attachShadow({mode: 'open'});
        this.shadowRoot.innerHTML = `
            <style>
                :host {
                    display: block;
                    height: 34px;
                    border-top: 1px solid #707070;
                    background: #000;
                }
                .tools {
                    display: flex;
                    position: relative;
                    z-index: 1;
                    height: 21px;
                    margin-left: 2px;
                    font-size: 11px;
                }
                .caption {
                    width: 72px;
                    color: #ffff00;
                    line-height: 14px;
                }
                .covers {
                    display: flex;
                    background: #000;
                }
                .period {
                    width: 18px;
                    height: 20px;
                    margin-right: 1px;
                    padding: 0;
                    border: 1px solid #fff;
                    border-right-color: #888;
                    border-bottom-color: #888;
                    background: #f0f0f0;
                    color: #000;
                    font: 15px/17px "Open Sans", "Noto Sans CJK TC", sans-serif;
                }
                .period.on {
                    background: #ff7b7b;
                }
                .interval {
                    display: grid;
                    width: 55px;
                    margin: 0 35px 0 2px;
                    background: #fff;
                }
                .interval > * {
                    grid-area: 1 / 1;
                }
                select {
                    appearance: none;
                    width: 55px;
                    height: 21px;
                    padding: 0 0 0 4px;
                    border: 0;
                    background: none;
                    color: #000;
                    font: 12px/20px "Open Sans", sans-serif;
                }
                .interval svg {
                    justify-self: end;
                    align-self: center;
                    margin-right: 3px;
                    pointer-events: none;
                }
                .preset {
                    font-size: 16px;
                    line-height: 22px;
                    white-space: nowrap;
                }
                .icons {
                    display: flex;
                    gap: 2px;
                    margin: 1px 4px 0 auto;
                }
                .icons button {
                    width: 16px;
                    height: 17px;
                    padding: 0;
                    border: 1px solid #fff;
                    border-right-color: #808080;
                    border-bottom-color: #808080;
                    background: #c0c0c0;
                }
                .icons svg {
                    display: block;
                }
                .quote {
                    display: flex;
                    gap: 14px;
                    margin: -5px 0 0 2px;
                    color: #ffff00;
                    line-height: 16px;
                    white-space: nowrap;
                }
                .quote > span:first-child {
                    width: 131px;
                    color: #33ffff;
                    white-space: pre;
                }
                .quote > span:nth-child(2) {
                    width: 47px;
                }
                b {
                    color: #fff;
                    font-weight: 400;
                }
                .red {
                    color: ${RED};
                }
                .cyan {
                    color: ${CYAN};
                }
            </style>
            <div class="tools">
                <span class="caption">技術線圖</span>
                <div class="covers">
                    <button class="period">日</button><button class="period">週</button><button class="period">月</button><button class="period on">分</button>
                    <div class="interval">
                        <select aria-label="分鐘"><option>30</option></select>
                        <svg width="19" height="19" shape-rendering="crispEdges">
                            <rect width="19" height="19" fill="#808080"/><rect width="18" height="18" fill="#fff"/><rect x="1" y="1" width="17" height="17" fill="#f0f0f0"/>
                            <path d="M5 8h9l-4.500 5z"/>
                        </svg>
                    </div>
                    <span class="preset">[ 01 - 系統建議設定 ]</span>
                </div>
                <div class="icons">
                    <button aria-label="固定"><svg width="14" height="14" shape-rendering="crispEdges"><path d="M1 6h4v1h-4zM5 3h1v8h-1zM10 3h1v8h-1zM6 5h4v1h-4zM6 9h4v1h-4z"/><rect x="6" y="6" width="4" height="3" fill="#ffff60"/></svg></button>
                    <button aria-label="縮小間距"><svg width="14" height="14"><path d="M2 7h10" stroke="#555" stroke-width="2"/></svg></button>
                    <button aria-label="放大間距"><svg width="14" height="14"><path d="M2 7h10M7 2v10" stroke="#555" stroke-width="2"/></svg></button>
                    <button aria-label="縮小"><svg width="14" height="14"><path d="M1.500 13L5.500 8.500" stroke="#8b5a2b" stroke-width="2"/><circle cx="8" cy="5.500" r="4" fill="#d5efff" stroke="#4565a8" stroke-width="1.500"/><path d="M6 5.500h4" stroke="#224" stroke-width="1.500"/></svg></button>
                    <button aria-label="放大"><svg width="14" height="14"><path d="M1.500 13L5.500 8.500" stroke="#8b5a2b" stroke-width="2"/><circle cx="8" cy="5.500" r="4" fill="#d5efff" stroke="#4565a8" stroke-width="1.500"/><path d="M6 5.500h4M8 3.500v4" stroke="#224" stroke-width="1.500"/></svg></button>
                    <button aria-label="列印"><svg width="14" height="14"><path d="M1 4l3-2h8l1 2-2 6H7L1 7z" fill="#9a9ad0" stroke="#444"/><path d="M4 3h7" stroke="#fff"/><path d="M2 8l5 1-2 4-3-2z" fill="#fff"/><path d="M3 10l4 2M5 9l-2 4" stroke="#d03030"/></svg></button>
                    <button aria-label="儲存"><svg width="14" height="14"><path d="M1 1h12v12H2l-1-1z" fill="#3f74b8"/><rect x="3" y="1" width="8" height="6" fill="#eef6ff"/><rect x="4" y="9" width="6" height="4" fill="#c8d8ea"/><rect x="5" y="10" width="2" height="3" fill="#234"/></svg></button>
                    <button aria-label="視窗"><svg width="14" height="14" shape-rendering="crispEdges"><rect x="4.500" y="1.500" width="8" height="7" fill="#c0c0c0" stroke="#444"/><path d="M4 3h9" stroke="#555" stroke-width="2"/><rect x="1.500" y="5.500" width="8" height="7" fill="#fff" stroke="#222"/><path d="M2 7h7" stroke="#2050e0" stroke-width="2"/><path d="M5.500 8v4" stroke="#222"/></svg></button>
                    <button aria-label="切換"><svg width="14" height="14"><path d="M2 3.500h6V1l5 3.500L8 8V6H2z" fill="#f8b020" stroke="#a86800" stroke-width=".5"/><path d="M12 8.500H6V6.500l-5 3.500L6 13.500V11h6z" fill="#f8b020" stroke="#a86800" stroke-width=".5"/></svg></button>
                </div>
            </div>
            <div class="quote">
                <span>B1YM&amp;  MI道瓊近一(2003)</span><span>13:39:36</span><b class="red">｜</b><b>29232C</b>
                <span>漲跌<b>▼165</b></span><span>買<b>29226</b></span><span>賣<b>29231</b></span><span>高<b class="red">29408</b></span>
                <span>低<b>29100</b></span><span>量<b class="cyan">268271</b></span><span>OI<b class="cyan">104452</b></span>
            </div>
        `;
    }
}

class ChartBoard extends HTMLElement {
    constructor() {
        super();
        this.attachShadow({mode: 'open'});
        this.shadowRoot.innerHTML = `
            <style>
                :host {
                    display: grid;
                    min-height: 0;
                    border: solid #808080;
                    border-width: 0 2px;
                    border-right-color: #d8d8d8;
                    padding: 0 2px 1px 0;
                    background: #000;
                }
                .board {
                    display: grid;
                    grid-template-columns: 93px 1fr 56px;
                    grid-template-rows: 537fr 177fr 177fr;
                    column-gap: 2px;
                    row-gap: 3px;
                    min-height: 0;
                    padding: 2px 0 1px 2px;
                    background: #fff;
                }
                .legend, .price {
                    display: flex;
                    flex-direction: column;
                    min-width: 0;
                    min-height: 0;
                }
                .legend {
                    gap: 1px;
                    background: #fff;
                }
                .legend > :last-child {
                    flex: 1;
                }
                .plot {
                    margin-left: 1px;
                }
                .price {
                    gap: 2px;
                }
                .price chart-plot {
                    flex: 1;
                }
                time-axis {
                    height: 17px;
                }
            </style>
            <div class="board">
                <div class="legend">
                    <indicator-table rows="2020/02/18||#ff0;|16:00:00|#ff0;開|29217|#ff0|#ff0|d;高|29238|#ff0|#ff0|u;低|29213|#ff0|#ff0|u;收|29232|#ff0|#ff0|u;漲跌|15|#ff0|${RED}|u">K</indicator-table>
                    <indicator-table rows="MA1(5)|29227|#24ff24|#24ff24|d;MA2(10)|29205|#5ff|#5ff|u;MA3(20)|29208|#f00|#f00|u;MA4(60)|29296|#ff0|#ff0|d;MA5(120)|29362|#fff|#fff|d;MA6(240)|29367|#7dff7d|#7dff7d|d">MA</indicator-table>
                    <indicator-table rows="MA20|29208|#ff0|#ff0|u;UBt|29300|${RED}|${RED}|u;LBt|29116|#fff|#fff|u">BOLL</indicator-table>
                </div>
                <div class="price plot">
                    <chart-plot kind="price"></chart-plot>
                    <time-axis></time-axis>
                </div>
                <value-axis kind="price" below="19" current="29232"></value-axis>

                <div class="legend">
                    <indicator-table rows="成交量|1084|#ff0|#ff0|d;V_MA1(5)|5695|#24ff24|#24ff24|d;V_MA2(10)|6456|#5ff|#5ff|d">VOL</indicator-table>
                </div>
                <chart-plot class="plot" kind="volume"></chart-plot>
                <value-axis kind="volume"></value-axis>

                <div class="legend">
                    <indicator-table rows="K9-D9|7.72|#ff0|${RED}|d;K9|74.22|#5ff|#5ff|u;D9|66.50|#f00|#f00|u;J(3D-2K)|51.05|#ff0|#ff0|u;J(3K-2D)|89.66|#fff|#fff|d">KDSLOW</indicator-table>
                </div>
                <chart-plot class="plot" kind="kd"></chart-plot>
                <value-axis kind="kd"></value-axis>
            </div>
        `;
    }
}

class StatusBar extends HTMLElement {
    constructor() {
        super();
        this.attachShadow({mode: 'open'});
        this.shadowRoot.innerHTML = `
            <style>
                :host {
                    display: flex;
                    height: 26px;
                    border-top: 2px solid #fff;
                    background: linear-gradient(#3e444e 0 8px, #2f2f2f 8px);
                    font-size: 17px;
                    line-height: 24px;
                    white-space: nowrap;
                }
                :host > * {
                    box-sizing: border-box;
                    margin: 1px 0 0;
                    padding: 0 4px 0 6px;
                    border: 0;
                    border-right: 1px solid #777;
                    background: none;
                    color: #fff;
                    font: inherit;
                    font-weight: 300;
                }
                .notice {
                    margin-right: auto;
                    padding-left: 8px;
                    color: #ffff00;
                }
                .deal {
                    margin-top: 2px;
                    padding: 0 4px;
                    border-left: 1px solid #777;
                    background: #ff8050;
                    line-height: 22px;
                }
                .clock {
                    width: 177px;
                    padding-left: 4px;
                    color: #ffff00;
                    font-weight: 400;
                }
                .icon {
                    display: flex;
                    align-items: center;
                    padding: 0 3px 0 2px;
                }
                .book {
                    padding: 0 12px 0 7px;
                }
                .brand {
                    margin-right: 8px;
                    padding: 0 4px;
                }
            </style>
            <button class="notice">即時公告</button>
            <button class="deal">成交</button>
            <button>開啟下單</button>
            <button>開啟回報</button>
            <button>開啟帳務</button>
            <time class="clock">2020/02/19 06:04:17</time>
            <span class="icon">
                <svg width="20" height="20"><path d="M3.500 1h4v11h3L5.500 18 .5 12h3z" fill="#3d6a1c"/><path d="M12.500 19h4V8h3L14.500 1 9.500 8h3z" fill="#8ee832"/></svg>
            </span>
            <span class="icon book">
                <svg width="7" height="20"><defs><linearGradient id="b" x2="1" y2="0"><stop stop-color="#5a3010"/><stop offset=".3" stop-color="#f8c890"/><stop offset=".6" stop-color="#b87838"/><stop offset="1" stop-color="#100800"/></linearGradient></defs><rect x="1" y="1" width="5" height="18" fill="url(#b)"/></svg>
            </span>
            <span class="icon brand">
                <svg width="84" height="24">
                    <text x="1" y="19" font-family="Inter, sans-serif" font-size="19" font-weight="700" fill="#1c1c1c" stroke="#c8c8c8" stroke-width="1">SYSTEX</text>
                    <rect x="72" y="10" width="4" height="4" fill="#f02020"/>
                </svg>
            </span>
        `;
    }
}

class TradeApp extends HTMLElement {
    constructor() {
        super();
        this.attachShadow({mode: 'open'});
        this.shadowRoot.innerHTML = `
            <style>
                :host {
                    display: grid;
                    grid-template-rows: auto auto auto 1fr auto;
                    height: 100vh;
                }
            </style>
            <title-bar>康和.全都賺 - TT02 - 技術分析</title-bar>
            <menu-bar></menu-bar>
            <quote-strip></quote-strip>
            <chart-board></chart-board>
            <status-bar></status-bar>
        `;
    }
}

customElements.define('chart-plot', ChartPlot);
customElements.define('value-axis', ValueAxis);
customElements.define('time-axis', TimeAxis);
customElements.define('indicator-table', IndicatorTable);
customElements.define('title-bar', TitleBar);
customElements.define('menu-bar', MenuBar);
customElements.define('quote-strip', QuoteStrip);
customElements.define('chart-board', ChartBoard);
customElements.define('status-bar', StatusBar);
customElements.define('trade-app', TradeApp);
</script>
</body>
</html>
